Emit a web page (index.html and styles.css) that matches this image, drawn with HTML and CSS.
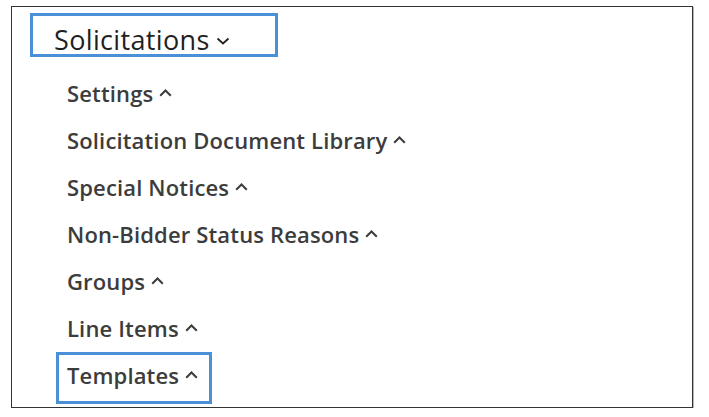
FILE: index.html
```html
<!DOCTYPE html>
<html>
<head>
<meta charset="utf-8">
<link rel="stylesheet" href="styles.css">
</head>
<body>
<div class="panel">
  <div class="head">
    <span class="head-label">Solicitations</span>
    <svg class="chev-down" width="14" height="8" viewBox="0 0 14 8"><path d="M1.5 1.5 L7 6.5 L12.5 1.5" fill="none" stroke="#222" stroke-width="1.8"/></svg>
  </div>
  <ul class="list">
    <li class="item"><span>Settings</span><svg class="chev-up" width="13" height="8" viewBox="0 0 13 8"><path d="M1.2 6.8 L6.5 1.5 L11.8 6.8" fill="none" stroke="#3c3c3c" stroke-width="2"/></svg></li>
    <li class="item"><span>Solicitation Document Library</span><svg class="chev-up" width="13" height="8" viewBox="0 0 13 8"><path d="M1.2 6.8 L6.5 1.5 L11.8 6.8" fill="none" stroke="#3c3c3c" stroke-width="2"/></svg></li>
    <li class="item"><span>Special Notices</span><svg class="chev-up" width="13" height="8" viewBox="0 0 13 8"><path d="M1.2 6.8 L6.5 1.5 L11.8 6.8" fill="none" stroke="#3c3c3c" stroke-width="2"/></svg></li>
    <li class="item"><span>Non-Bidder Status Reasons</span><svg class="chev-up" width="13" height="8" viewBox="0 0 13 8"><path d="M1.2 6.8 L6.5 1.5 L11.8 6.8" fill="none" stroke="#3c3c3c" stroke-width="2"/></svg></li>
    <li class="item"><span>Groups</span><svg class="chev-up" width="13" height="8" viewBox="0 0 13 8"><path d="M1.2 6.8 L6.5 1.5 L11.8 6.8" fill="none" stroke="#3c3c3c" stroke-width="2"/></svg></li>
    <li class="item"><span>Line Items</span><svg class="chev-up" width="13" height="8" viewBox="0 0 13 8"><path d="M1.2 6.8 L6.5 1.5 L11.8 6.8" fill="none" stroke="#3c3c3c" stroke-width="2"/></svg></li>
    <li class="item selected"><span>Templates</span><svg class="chev-up" width="13" height="8" viewBox="0 0 13 8"><path d="M1.2 6.8 L6.5 1.5 L11.8 6.8" fill="none" stroke="#3c3c3c" stroke-width="2"/></svg></li>
  </ul>
</div>
</body>
</html>
```
FILE: styles.css
```css
html, body {
  margin: 0;
  padding: 0;
  background: #ffffff;
}
.panel {
  box-sizing: border-box;
  margin: 6px 0 0 11px;
  width: 682px;
  height: 402px;
  border: 1px solid #333;
  box-shadow: 1px 1px 0 #b5b5b5;
  padding: 6px 0 0 18px;
  font-family: "Open Sans", "Noto Sans", sans-serif;
}
.head {
  box-sizing: border-box;
  width: 248px;
  height: 44px;
  border: 3px solid #4a90d9;
  padding: 0 0 0 21px;
  display: flex;
  align-items: center;
  gap: 6px;
}
.head-label {
  font-size: 27px;
  letter-spacing: 0.35px;
  color: #1f1f1f;
  line-height: 34px;
  padding-top: 9px;
}
.chev-down {
  margin-top: 11px;
}
.list {
  list-style: none;
  margin: 16px 0 0 29px;
  padding: 0;
  display: flex;
  flex-direction: column;
  gap: 1px;
}
.item {
  display: flex;
  align-items: center;
  gap: 6px;
  width: fit-content;
  height: 46px;
  padding: 0 11px 0 8px;
  font-size: 22px;
  letter-spacing: 0.15px;
  font-weight: 600;
  color: #3c3c3c;
}
.item span {
  line-height: 40px;
  padding-bottom: 6px;
}
.chev-up {
  margin-top: -6px;
}
.selected {
  outline: 3px solid #4a90d9;
}
```
